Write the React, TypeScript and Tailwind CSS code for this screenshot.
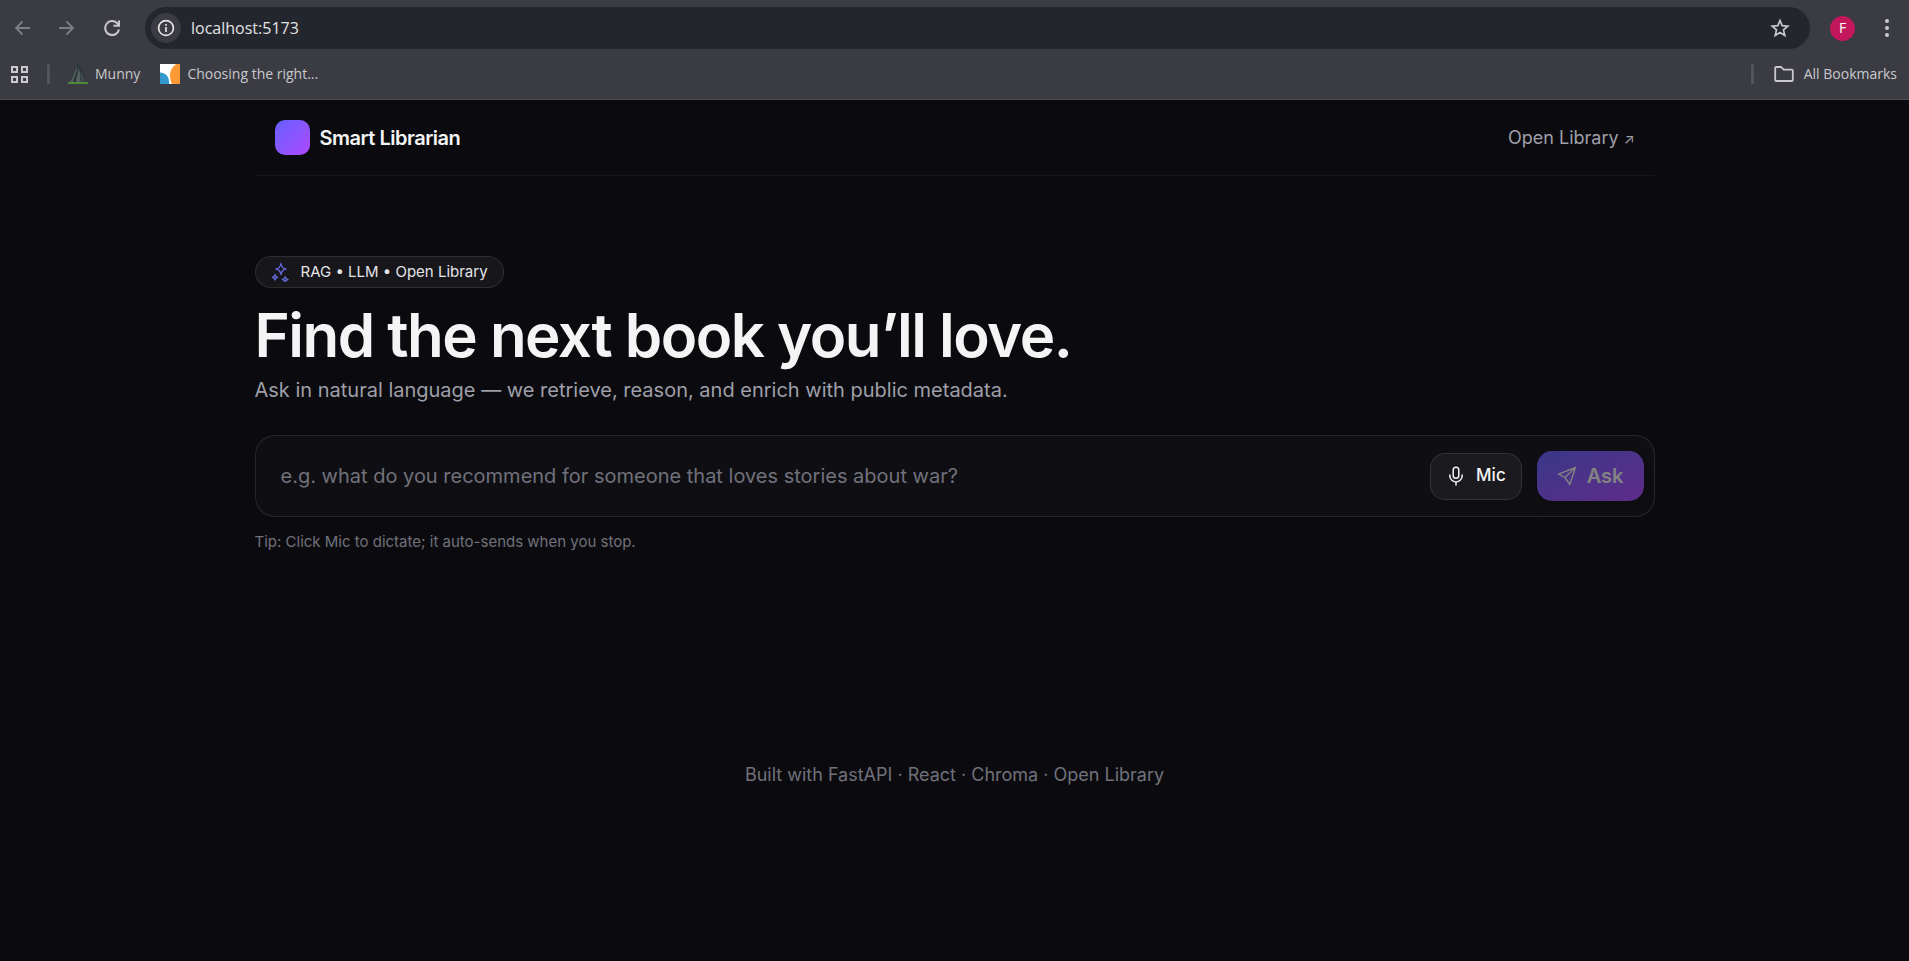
import type { ReactNode } from "react";

function MunnyIcon() {
  return (
    <svg viewBox="0 0 20 20" className="size-5" aria-hidden="true">
      <path d="M1 18 C5 13 6 3 9 2 C11 0 13 2 14 4 C17 8 16 14 19 18Z" fill="#30383a" />
      <path d="M2 18 C6 13 6 6 9 3 C9 8 6 12 5 18Z M8 18 C8 13 11 9 10 4 C13 8 11 13 13 18Z" fill="#566163" />
      <path d="M14 18 C13 14 12 11 13 8 C15 11 15 15 17 18Z" fill="#454f51" />
      <path d="M0 18h20v2H0z" fill="#4f8a3a" />
    </svg>
  );
}

function ArticleIcon() {
  return (
    <svg viewBox="0 0 20 20" className="size-5" aria-hidden="true">
      <path d="M0 0h20v20H0z" fill="#fff" />
      <path d="M0 8.500c5 0 9 4 9 9V20H0z" fill="#3399cc" />
      <path d="M20 0h-4c-4 3-6 7-6 11 0 4 1 7 2 9h8z" fill="#ff9933" />
    </svg>
  );
}

function SparklesIcon() {
  return (
    <svg viewBox="0 0 20 20" className="size-5 text-[#6466d8]" fill="none" stroke="currentColor" strokeWidth="1.400" strokeLinejoin="round" aria-hidden="true">
      <path d="M10 1.500 C10.600 5 12 6.500 15 7 C12 7.600 10.600 9 10 12.500 C9.400 9 8 7.600 5 7 C8 6.500 9.400 5 10 1.500Z" />
      <path d="M4 12.500 C4.300 14.300 5 15 6.600 15.300 C5 15.600 4.300 16.300 4 18 C3.700 16.300 3 15.600 1.400 15.300 C3 15 3.700 14.300 4 12.500Z" />
      <path d="M14.200 14.800 C14.500 16.500 15.300 17.200 17 17.500 C15.300 17.800 14.500 18.500 14.200 20 C13.900 18.500 13.100 17.800 11.400 17.500 C13.100 17.200 13.900 16.500 14.200 14.800Z" />
    </svg>
  );
}

function MicIcon() {
  return (
    <svg viewBox="0 0 20 20" className="size-5" fill="none" stroke="currentColor" strokeWidth="1.500" aria-hidden="true">
      <rect x="7.200" y="1.200" width="5.600" height="11" rx="2.800" />
      <path d="M3.800 8.500v1.200a6.200 6.200 0 0 0 12.400 0V8.500M10 16v3.500" />
    </svg>
  );
}

function SendIcon() {
  return (
    <svg viewBox="0 0 20 20" className="size-5" fill="none" stroke="currentColor" strokeWidth="1.400" strokeLinejoin="round" aria-hidden="true">
      <path d="M18.500 1.500 1.500 8.200 8 11.500 12.800 18.500Z M18.500 1.500 8 11.500" />
    </svg>
  );
}

function ToolButton({ label, children }: { label: string; children: ReactNode }) {
  return (
    <button type="button" aria-label={label} className="flex size-5 items-center justify-center">
      {children}
    </button>
  );
}

function BrowserBar() {
  return (
    <div className="border-b border-[#4d4e52] bg-[#3a3b43] font-['Open_Sans','Noto_Sans',sans-serif] text-[#c9c9cc]">
      <div className="flex items-center pt-[7px] pr-3 pl-3">
        <div className="flex items-center gap-[25px]">
          <div className="flex gap-[25px] text-[#7d7e84]">
            <ToolButton label="Back">
              <svg viewBox="0 0 20 20" className="size-5" fill="none" stroke="currentColor" strokeWidth="1.800" aria-hidden="true"><path d="M18 10H4M10.500 3.500 4 10l6.500 6.500" /></svg>
            </ToolButton>
            <ToolButton label="Forward">
              <svg viewBox="0 0 20 20" className="size-5" fill="none" stroke="currentColor" strokeWidth="1.800" aria-hidden="true"><path d="M2 10h14M9.500 3.500 16 10l-6.500 6.500" /></svg>
            </ToolButton>
          </div>
          <ToolButton label="Reload">
            <svg viewBox="0 0 20 20" className="size-5" fill="none" stroke="currentColor" strokeWidth="2" aria-hidden="true"><path d="M17 11.500a7 7 0 1 1-2-6.500l2 2.500M17 2.500v5.200h-5.500" /></svg>
          </ToolButton>
        </div>
        <div className="ml-[23px] flex h-[42px] flex-1 items-center rounded-full bg-[#24262e] pr-5 pl-1.5">
          <button type="button" aria-label="View site information" className="flex size-[30px] items-center justify-center rounded-full bg-[#3a3b43] text-[#e3e3e3]">
            <svg viewBox="0 0 20 20" className="size-5" fill="none" stroke="currentColor" strokeWidth="1.700" aria-hidden="true"><circle cx="10" cy="10" r="7.400" /><path d="M10 9v5M10 6v1.800" /></svg>
          </button>
          <input aria-label="Address" defaultValue="localhost:5173" className="ml-2.5 min-w-0 flex-1 bg-transparent text-base text-[#e3e3e3] outline-none" />
          <ToolButton label="Bookmark this tab">
            <svg viewBox="0 0 20 20" className="size-5" fill="none" stroke="currentColor" strokeWidth="1.700" aria-hidden="true"><path d="m10 2.500 2.200 5.200 5.600.5-4.300 3.700 1.300 5.600-4.800-3-4.800 3 1.300-5.600-4.300-3.700 5.600-.5Z" /></svg>
          </ToolButton>
        </div>
        <button type="button" aria-label="Profile" className="ml-5 flex size-[25px] items-center justify-center rounded-full bg-[#c2185b] text-sm text-white">F</button>
        <span className="ml-[22px]">
          <ToolButton label="Menu">
            <svg viewBox="0 0 20 20" className="size-5" fill="currentColor" aria-hidden="true"><circle cx="10" cy="3" r="2" /><circle cx="10" cy="10" r="2" /><circle cx="10" cy="17" r="2" /></svg>
          </ToolButton>
        </span>
      </div>
      <nav aria-label="Bookmarks" className="flex h-[50px] items-center pr-3 pl-[9px] text-sm">
        <ToolButton label="Apps">
          <svg viewBox="0 0 20 20" className="size-5" fill="none" stroke="currentColor" strokeWidth="2" aria-hidden="true"><path d="M3 3h5v5H3zM13 3h5v5h-5zM3 13h5v5H3zM13 13h5v5h-5z" /></svg>
        </ToolButton>
        <span className="ml-[18px] h-5 w-[3px] rounded-full bg-[#54555c]" />
        <a href="#munny" className="ml-[18px] flex items-center gap-[7px]"><MunnyIcon />Munny</a>
        <a href="#choosing" className="ml-5 flex items-center gap-[7px]"><ArticleIcon />Choosing the right...</a>
        <span className="ml-auto h-5 w-[3px] rounded-full bg-[#54555c]" />
        <button type="button" className="ml-5 flex items-center gap-[10px]">
          <svg viewBox="0 0 20 20" className="size-5" fill="none" stroke="currentColor" strokeWidth="1.800" strokeLinejoin="round" aria-hidden="true"><path d="M1.200 16V4q0-1 1-1h5l2.500 2.700h8.100q1 0 1 1V16q0 1-1 1H2.200q-1 0-1-1Z" /></svg>
          All Bookmarks
        </button>
      </nav>
    </div>
  );
}

export default function App() {
  return (
    <div className="flex min-h-screen flex-col bg-[#0b0b0f] font-['Inter',sans-serif] text-[#f4f4f5]">
      <BrowserBar />
      <div className="mx-auto w-full max-w-[1400px]">
        <header className="flex items-center justify-between border-b border-white/5 p-5">
          <div className="flex items-center gap-[10px]">
            <span className="size-[35px] rounded-[10px] bg-linear-to-br from-[#615fff] to-[#ad46ff]" />
            <span className="text-xl font-semibold tracking-tight">Smart Librarian</span>
          </div>
          <a href="https://openlibrary.org" className="text-lg text-[#9f9fa9]">Open Library <span className="text-sm">↗</span></a>
        </header>

        <main className="pt-20">
          <div className="inline-flex h-8 items-center gap-[10px] rounded-full border border-white/10 bg-white/5 px-[15px] text-[15px] text-[#e4e4e7]">
            <SparklesIcon />
            RAG • LLM • Open Library
          </div>
          <h1 className="mt-[15px] text-[60px] leading-[64px] font-semibold tracking-tight">Find the next book you’ll love.</h1>
          <p className="mt-2 text-xl leading-[30px] text-[#9f9fa9]">Ask in natural language — we retrieve, reason, and enrich with public metadata.</p>
          <form onSubmit={(event) => event.preventDefault()} className="mt-[30px] flex h-[82px] items-center rounded-[20px] border border-white/10 bg-white/2 pr-[10px] pl-[25px]">
            <input aria-label="Your question" placeholder="e.g. what do you recommend for someone that loves stories about war?" className="min-w-0 flex-1 bg-transparent text-xl outline-none placeholder:text-[#71717b]" />
            <button type="button" className="flex h-[47px] items-center gap-[10px] rounded-[15px] border border-white/10 bg-[#1b1b1f] px-[15px] text-[17px] font-medium">
              <MicIcon />
              Mic
            </button>
            <button type="submit" disabled className="ml-[15px] flex h-[50px] items-center gap-[10px] rounded-[15px] bg-linear-to-br from-[#615fff] to-[#ad46ff] px-5 text-xl font-semibold opacity-50 shadow-lg">
              <SendIcon />
              Ask
            </button>
          </form>
          <p className="mt-[15px] text-[15px] leading-5 text-[#71717b]">Tip: Click Mic to dictate; it auto-sends when you stop.</p>
        </main>
        <footer className="mt-[209px] text-center text-lg leading-7 text-[#71717b]">Built with FastAPI · React · Chroma · Open Library</footer>
      </div>
    </div>
  );
}
